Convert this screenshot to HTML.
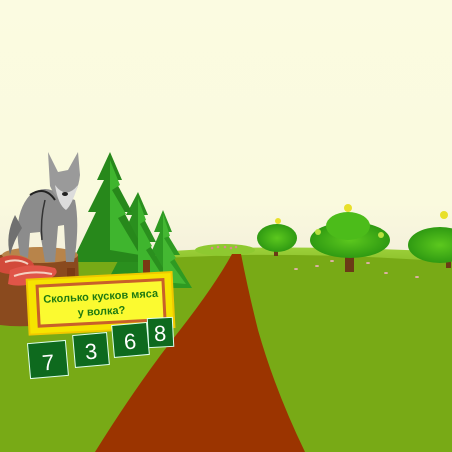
<!DOCTYPE html>
<html><head><meta charset="utf-8"><style>
html,body{margin:0;padding:0;width:452px;height:452px;overflow:hidden}
</style></head><body>
<svg width="452" height="452" viewBox="0 0 452 452" xmlns="http://www.w3.org/2000/svg" font-family="Liberation Sans, sans-serif">
<defs>
<linearGradient id="sky" x1="0" y1="0" x2="0" y2="1">
<stop offset="0" stop-color="#fbfbe1"/><stop offset="0.45" stop-color="#fafade"/><stop offset="0.55" stop-color="#f5f1dc"/><stop offset="0.6" stop-color="#e8eed8"/>
</linearGradient>
<linearGradient id="gr" x1="0" y1="0" x2="0" y2="1">
<stop offset="0" stop-color="#9cd03a"/><stop offset="0.15" stop-color="#7eb11c"/><stop offset="1" stop-color="#73a513"/>
</linearGradient>
<radialGradient id="tree" cx="0.5" cy="0.5" r="0.5"><stop offset="0" stop-color="#5cc81e"/><stop offset="1" stop-color="#2f9a12"/></radialGradient>
</defs>
<rect width="452" height="452" fill="url(#sky)"/>
<path d="M0 270 Q120 252 230 248 Q330 246 452 252 L452 452 L0 452Z" fill="url(#gr)"/>
<path d="M0 265 Q150 258 240 255 Q350 254 452 262 L452 452 L0 452Z" fill="#78aa16"/>
<ellipse cx="225" cy="250" rx="30" ry="6" fill="#8ec930"/>
<g fill="#d98a8a"><circle cx="212" cy="248" r="1.3"/><circle cx="218" cy="247" r="1.3"/><circle cx="225" cy="247" r="1.3"/><circle cx="231" cy="248" r="1.3"/><circle cx="236" cy="247" r="1.3"/></g>
<path d="M232 254 L241 254 Q248 290 258 330 Q275 390 305 452 L95 452 Q140 380 180 330 Q215 285 232 254Z" fill="#9b3400"/>
<g>
<rect x="274" y="240" width="4" height="16" fill="#6b3a16"/>
<ellipse cx="277" cy="238" rx="20" ry="14" fill="url(#tree)"/>
<circle cx="278" cy="221" r="3" fill="#e8e02a"/>
<rect x="345" y="245" width="9" height="27" fill="#6b3a16"/>
<ellipse cx="350" cy="240" rx="40" ry="18" fill="url(#tree)"/>
<ellipse cx="348" cy="226" rx="22" ry="14" fill="#4cbc1a"/>
<circle cx="348" cy="208" r="4" fill="#e8e02a"/>
<circle cx="318" cy="232" r="3" fill="#b8e040"/><circle cx="381" cy="235" r="3" fill="#b8e040"/>
<rect x="446" y="248" width="5" height="20" fill="#6b3a16"/>
<ellipse cx="440" cy="245" rx="32" ry="18" fill="url(#tree)"/>
<circle cx="444" cy="215" r="4" fill="#e8e02a"/>
</g>
<g fill="#e0b0a8"><ellipse cx="296" cy="269" rx="2" ry="1"/><ellipse cx="317" cy="266" rx="2" ry="1"/><ellipse cx="332" cy="261" rx="2" ry="1"/><ellipse cx="368" cy="263" rx="2" ry="1"/><ellipse cx="386" cy="273" rx="2" ry="1"/><ellipse cx="417" cy="277" rx="2" ry="1"/></g>
<!-- layered fir trees -->
<g>
<path d="M163 210 L172 232 L166 232 L180 255 L172 255 L192 288 L138 288 L156 255 L150 255 L160 232 L154 232Z" fill="#2e9a22"/>
<path d="M138 192 L148 215 L142 215 L156 242 L148 242 L170 280 L108 280 L128 242 L120 242 L132 215 L126 215Z" fill="#2a8f1e"/>
<path d="M110 152 L122 180 L115 180 L132 212 L124 212 L150 262 L72 262 L96 212 L88 212 L104 180 L97 180Z" fill="#27881b"/>
<path d="M110 160 L120 185 L112 190 L126 214 L118 218 L140 255 L110 250Z" fill="#3fb52e"/>
<path d="M138 198 L146 220 L140 224 L152 246 L146 250 L162 275 L138 272Z" fill="#3fb52e"/>
<path d="M163 214 L170 236 L164 238 L176 258 L170 262 L186 284 L163 282Z" fill="#44b832"/>
</g>
<path d="M0 255 Q40 245 78 255 L80 315 Q40 330 0 325Z" fill="#8a4a1e"/>
<ellipse cx="40" cy="255" rx="38" ry="8" fill="#b8844a"/>
<path d="M0 258 Q15 252 30 260 Q40 268 25 272 Q10 276 0 272Z" fill="#d24a3a"/>
<path d="M10 270 Q30 262 55 268 Q62 276 40 282 Q20 288 8 284Z" fill="#e05548"/>
<path d="M5 262 Q18 258 28 264" stroke="#f4d0c0" stroke-width="2" fill="none"/>
<path d="M14 276 Q32 270 52 274" stroke="#f4d0c0" stroke-width="2" fill="none"/>
<g>
<path d="M20 255 Q12 215 30 195 Q45 183 60 195 L75 200 Q80 225 74 262 L66 262 L64 225 L58 226 L55 262 L45 262 L40 232 L30 233 L28 258Z" fill="#8c8c8c"/>
<path d="M15 215 Q5 235 10 255 Q14 240 22 228Z" fill="#707070"/>
<path d="M48 152 L58 172 L68 170 L78 152 L80 175 Q78 195 66 202 Q56 200 50 186Z" fill="#9a9a9a"/>
<path d="M55 185 Q66 200 78 185 Q72 205 66 210 Q58 205 55 185Z" fill="#dcdcdc"/>
<ellipse cx="65" cy="194" rx="3" ry="2" fill="#222"/>
<path d="M30 195 Q45 185 55 200" stroke="#222" stroke-width="2" fill="none"/>
<path d="M45 200 Q40 220 42 240" stroke="#333" stroke-width="1.5" fill="none"/>
</g>
<rect x="67" y="268" width="8" height="14" fill="#7a3a14"/>
<rect x="143" y="260" width="7" height="14" fill="#7a3a14"/>
<g transform="rotate(-3 98 302)">
<rect x="28" y="276" width="145" height="55" fill="#f6e400" stroke="#f0c800" stroke-width="2"/>
<rect x="38" y="283" width="126" height="40" fill="#fbfa30" stroke="#c8602a" stroke-width="3"/>
<text x="101" y="300" text-anchor="middle" font-size="11" font-weight="bold" fill="#1f7a10">Сколько кусков мяса</text>
<text x="101" y="315" text-anchor="middle" font-size="11" font-weight="bold" fill="#1f7a10">у волка?</text>
</g>
<g font-size="22" fill="#fff" text-anchor="middle">
<g transform="rotate(-5 48 360)"><rect x="29" y="342" width="38" height="35" fill="#0e6a1e" stroke="#dfe" stroke-width="1"/><text x="48" y="370" fill="#fff">7</text></g>
<g transform="rotate(-5 91 350)"><rect x="74" y="334" width="34" height="32" fill="#0e6a1e" stroke="#dfe" stroke-width="1"/><text x="91" y="359" fill="#fff">3</text></g>
<g transform="rotate(-5 130 340)"><rect x="113" y="324" width="35" height="32" fill="#0e6a1e" stroke="#dfe" stroke-width="1"/><text x="130" y="349" fill="#fff">6</text></g>
<g transform="rotate(-3 160 332)"><rect x="148" y="318" width="25" height="29" fill="#0e6a1e" stroke="#dfe" stroke-width="1"/><text x="160" y="341" fill="#fff">8</text></g>
</g>
</svg>
</body></html>
